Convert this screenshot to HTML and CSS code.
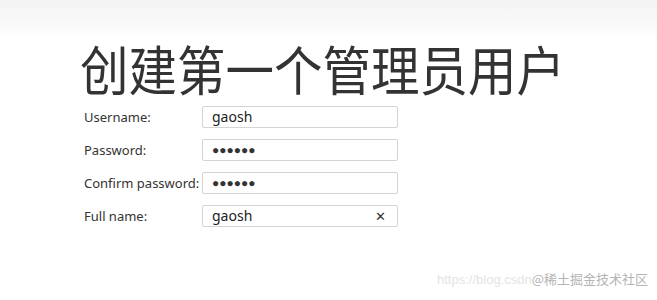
FILE: index.html
```html
<!DOCTYPE html>
<html lang="zh-CN">
<head>
    <meta charset="UTF-8">
    <meta name="viewport" content="width=device-width, initial-scale=1.0">
    <title>创建第一个管理员用户</title>
    <link rel="stylesheet" href="styles.css">
</head>
<body>
    <div class="top-band"></div>
    <div class="setup-container">
        <h1 class="setup-title"><span>创建第一个管理员用户</span></h1>
        <form class="setup-form" action="">
            <div class="form-row">
                <label for="username" class="form-label">Username:</label>
                <div class="form-field">gaosh</div>
            </div>
            <div class="form-row">
                <label for="password1" class="form-label">Password:</label>
                <div class="form-field dots">●●●●●●</div>
            </div>
            <div class="form-row">
                <label for="password2" class="form-label">Confirm password:</label>
                <div class="form-field dots">●●●●●●</div>
            </div>
            <div class="form-row">
                <label for="fullname" class="form-label">Full name:</label>
                <div class="form-field has-clear">
                    <span>gaosh</span>
                    <span class="clear-btn">✕</span>
                </div>
            </div>
        </form>
    </div>
    <div class="watermark">https://blog.csdn<span class="wm-dark">@稀土掘金技术社区</span></div>
</body>
</html>
```

FILE: styles.css
```css
html, body {
    margin: 0;
    padding: 0;
    height: 100%;
    background-color: #fff;
    overflow: hidden;
}
body {
    font-family: "Noto Sans", "Open Sans", sans-serif;
    color: #333;
}
.top-band {
    height: 37px;
    background: linear-gradient(#f4f4f4, #f8f8f8 60%, #fff);
}
.setup-container {
    padding-left: 80px;
}
.setup-title {
    margin: 0;
    font-family: "Noto Sans CJK SC", sans-serif;
    font-weight: 400;
    font-size: 53px;
    line-height: 63px;
    color: #333;
}
.setup-title span {
    display: inline-block;
    transform: scaleX(0.915);
    transform-origin: left center;
}
.setup-form {
    padding-left: 4px;
}
.form-row {
    display: flex;
    align-items: center;
    height: 33px;
}
.form-label {
    width: 118px;
    font-size: 13px;
    color: #333;
}
.form-field {
    box-sizing: border-box;
    width: 196px;
    height: 22px;
    border: 1px solid #d4d4d4;
    border-radius: 2px;
    padding: 0 9px;
    font-size: 14px;
    line-height: 20px;
    color: #222;
    display: flex;
    align-items: center;
}
.dots {
    font-size: 12px;
    color: #333;
}
.has-clear {
    justify-content: space-between;
}
.clear-btn {
    font-size: 13px;
    color: #333;
    padding-right: 2px;
}
.watermark {
    position: absolute;
    right: 9px;
    bottom: 12px;
    font-family: "Liberation Sans", "Noto Sans CJK SC", sans-serif;
    font-size: 13px;
    color: #e4e4e4;
}
.wm-dark {
    color: #b4b4b4;
    font-family: "Noto Sans CJK SC", sans-serif;
}
```
